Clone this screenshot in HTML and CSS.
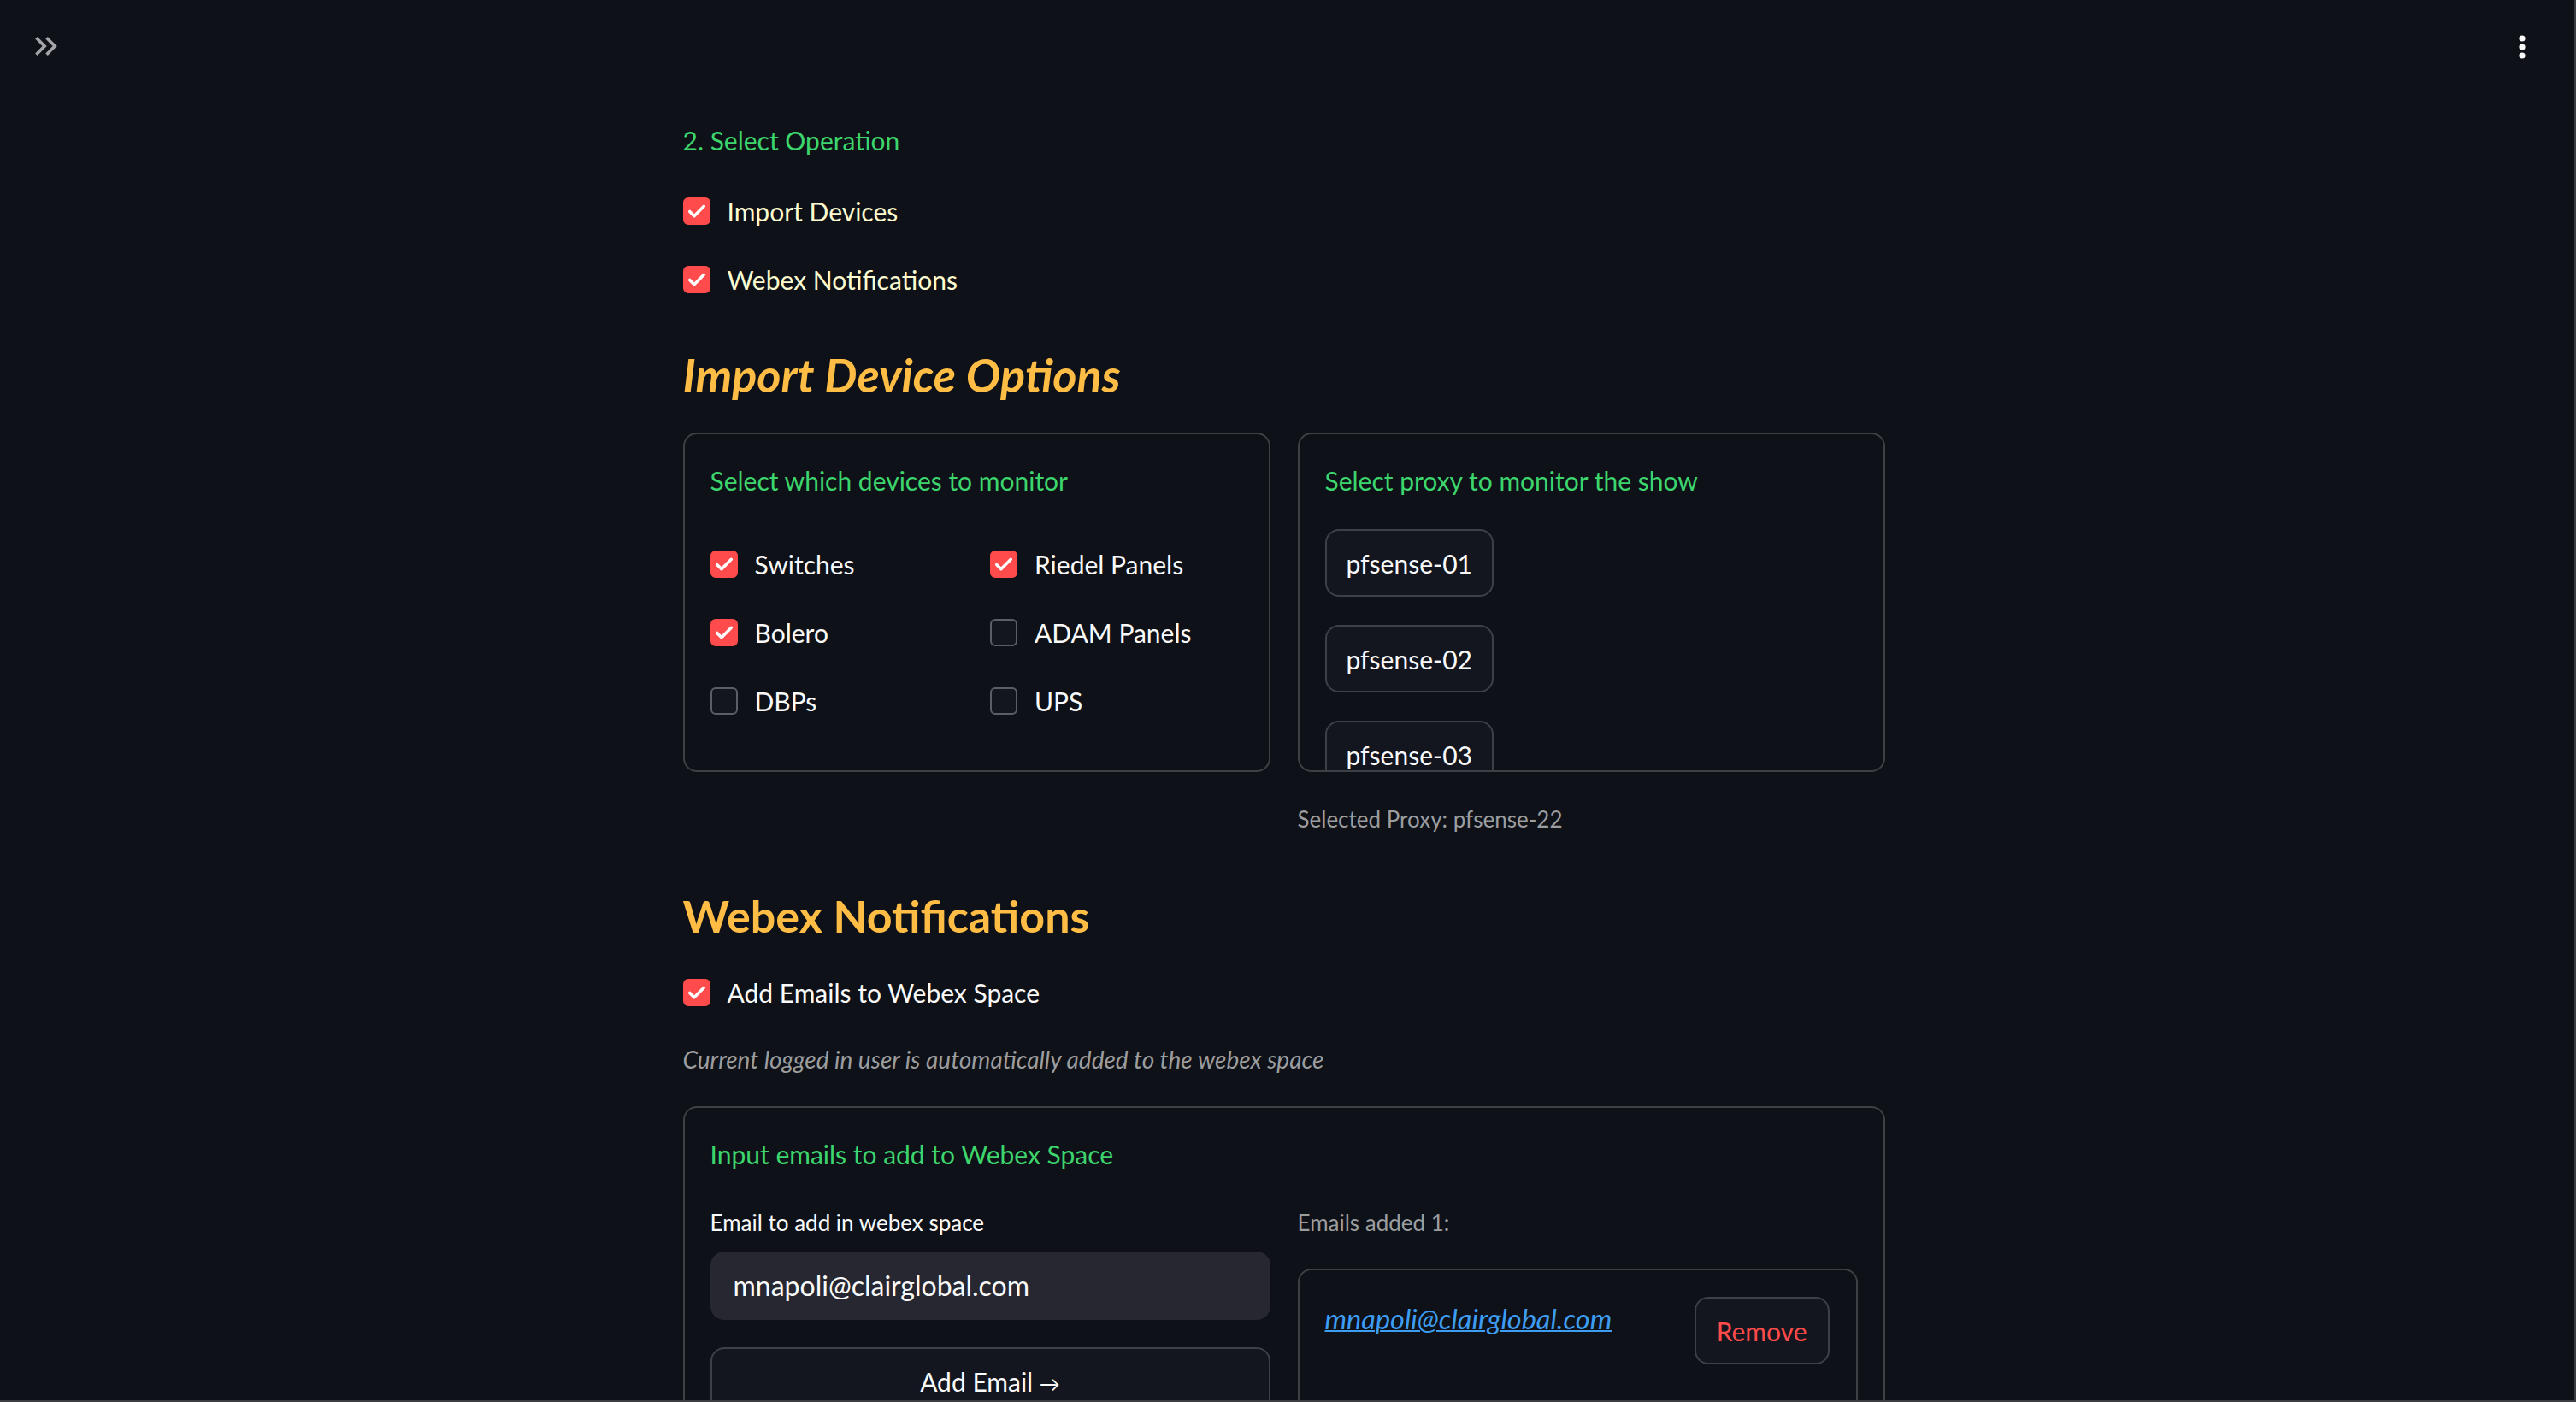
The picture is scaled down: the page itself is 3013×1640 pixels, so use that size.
FILE: index.html
```html
<!DOCTYPE html>
<html lang="en">
<head>
  <meta charset="UTF-8">
  <title>Show Setup</title>
  <link rel="stylesheet" href="styles.css">
</head>
<body>
<div class="app">

  <header class="toolbar">
    <button class="icon-btn" title="Open sidebar">
      <svg width="44" height="44" viewBox="0 0 24 24"><path fill="currentColor" d="M6.41 6 5 7.41 9.58 12 5 16.59 6.41 18l6-6z"/><path fill="currentColor" d="M13 6l-1.41 1.41L16.17 12l-4.58 4.59L13 18l6-6z"/></svg>
    </button>
    <button class="icon-btn menu-btn" title="Main menu">
      <svg width="40" height="40" viewBox="0 0 40 40"><circle cx="20" cy="10" r="3.6" fill="currentColor"/><circle cx="20" cy="20" r="3.6" fill="currentColor"/><circle cx="20" cy="30" r="3.6" fill="currentColor"/></svg>
    </button>
  </header>

  <main class="main">
    <p class="step">2. Select Operation</p>

    <label class="check check-op is-on">
      <span class="box"><svg viewBox="0 0 32 32"><polyline points="6.5,16.5 12.5,22.5 25.5,9.5"/></svg></span>
      <span class="check-text">Import Devices</span>
    </label>
    <label class="check check-op is-on">
      <span class="box"><svg viewBox="0 0 32 32"><polyline points="6.5,16.5 12.5,22.5 25.5,9.5"/></svg></span>
      <span class="check-text">Webex Notifications</span>
    </label>

    <h3 class="section-title italic">Import Device Options</h3>

    <div class="panel-row">
      <div class="panel">
        <p class="step">Select which devices to monitor</p>
        <div class="check-grid">
          <label class="check is-on">
            <span class="box"><svg viewBox="0 0 32 32"><polyline points="6.5,16.5 12.5,22.5 25.5,9.5"/></svg></span>
            <span class="check-text">Switches</span>
          </label>
          <label class="check is-on">
            <span class="box"><svg viewBox="0 0 32 32"><polyline points="6.5,16.5 12.5,22.5 25.5,9.5"/></svg></span>
            <span class="check-text">Riedel Panels</span>
          </label>
          <label class="check is-on">
            <span class="box"><svg viewBox="0 0 32 32"><polyline points="6.5,16.5 12.5,22.5 25.5,9.5"/></svg></span>
            <span class="check-text">Bolero</span>
          </label>
          <label class="check">
            <span class="box"></span>
            <span class="check-text">ADAM Panels</span>
          </label>
          <label class="check">
            <span class="box"></span>
            <span class="check-text">DBPs</span>
          </label>
          <label class="check">
            <span class="box"></span>
            <span class="check-text">UPS</span>
          </label>
        </div>
      </div>

      <div class="panel-col">
        <div class="panel panel-scroll">
          <p class="step">Select proxy to monitor the show</p>
          <div class="proxy-list">
            <button class="btn">pfsense-01</button>
            <button class="btn">pfsense-02</button>
            <button class="btn">pfsense-03</button>
            <button class="btn">pfsense-04</button>
          </div>
        </div>
        <p class="caption">Selected Proxy: pfsense-22</p>
      </div>
    </div>

    <h3 class="section-title webex-title">Webex Notifications</h3>

    <label class="check check-emails is-on">
      <span class="box"><svg viewBox="0 0 32 32"><polyline points="6.5,16.5 12.5,22.5 25.5,9.5"/></svg></span>
      <span class="check-text">Add Emails to Webex Space</span>
    </label>

    <p class="caption note">Current logged in user is automatically added to the webex space</p>

    <div class="panel panel-emails">
      <p class="step">Input emails to add to Webex Space</p>
      <div class="email-cols">
        <div class="email-col">
          <p class="field-label">Email to add in webex space</p>
          <div class="text-input">mnapoli@clairglobal.com</div>
          <button class="btn btn-wide">Add Email <span class="arrow">→</span></button>
        </div>
        <div class="email-col">
          <p class="field-label muted">Emails added 1:</p>
          <div class="email-list">
            <a class="email-link" href="#">mnapoli@clairglobal.com</a>
            <button class="btn btn-remove">Remove</button>
          </div>
        </div>
      </div>
    </div>
  </main>

  <div class="window-edge"></div>
</div>
</body>
</html>
```

FILE: styles.css
```css
* {
  box-sizing: border-box;
}
html, body {
  height: 1640px;
  overflow: hidden;
}
body {
  margin: 0;
  background: #0e1117;
  color: #fafafa;
  font-family: Lato, "Noto Sans", sans-serif;
  font-size: 30px;
}
p {
  margin: 0;
}
.app {
  height: 1640px;
  overflow: hidden;
  padding-right: 10px;
}

/* top bar */
.toolbar {
  position: fixed;
  top: 0;
  left: 0;
  right: 0;
  display: flex;
  justify-content: space-between;
  padding: 32px 43px 0 32px;
}
.icon-btn {
  border: none;
  background: none;
  padding: 0;
  color: #a3a5ab;
  display: block;
}
.icon-btn svg {
  display: block;
}
.menu-btn {
  color: #fafafa;
  margin-top: 2px;
}

/* main column */
.main {
  max-width: 1406px;
  margin: 0 auto;
  padding-top: 140px;
}
.step {
  color: #3dd56d;
  height: 48px;
  line-height: 48px;
}

/* checkboxes */
.check {
  display: flex;
  align-items: center;
  gap: 20px;
  height: 48px;
}
.check-op {
  margin-top: 35px;
  color: #fdfbcf;
}
.check-op + .check-op {
  margin-top: 32px;
}
.box {
  width: 32px;
  height: 32px;
  border-radius: 6px;
  border: 2px solid #5b5e65;
  background: #13161d;
  flex: none;
}
.is-on .box {
  border-color: #ff4b4b;
  background: #ff4b4b;
}
.box svg {
  display: block;
  width: 28px;
  height: 28px;
}
.box polyline {
  fill: none;
  stroke: #fff;
  stroke-width: 4;
  stroke-linecap: round;
  stroke-linejoin: round;
}

/* headings */
.section-title {
  margin: 52px 0 0;
  color: #ffbd45;
  font-size: 52px;
  font-weight: 700;
  height: 72px;
  line-height: 72px;
}
.italic {
  font-style: italic;
  font-size: 54px;
}
.webex-title {
  margin-top: 57px;
}

/* bordered containers */
.panel-row {
  display: grid;
  grid-template-columns: 1fr 1fr;
  gap: 32px;
  margin-top: 31px;
}
.panel {
  border: 2px solid #3d4044;
  border-radius: 16px;
  padding: 30px;
}
.panel-row .panel {
  height: 397px;
}
.panel-scroll {
  overflow: hidden;
}
.check-grid {
  display: grid;
  grid-template-columns: 1fr 1fr;
  column-gap: 32px;
  row-gap: 32px;
  margin-top: 50px;
}
.proxy-list {
  display: flex;
  flex-direction: column;
  align-items: flex-start;
  gap: 33px;
  margin-top: 33px;
}

/* buttons */
.btn {
  font-family: inherit;
  font-size: 30px;
  color: #fafafa;
  background: #13161e;
  border: 2px solid #3d4046;
  border-radius: 16px;
  height: 79px;
  padding: 0 23px;
}
.btn-wide {
  display: block;
  width: 100%;
  height: 80px;
  margin-top: 32px;
}
.arrow {
  font-size: 24px;
}
.btn-remove {
  color: #ff4b4b;
  padding: 0 24px;
  flex: none;
}

.caption {
  color: #9c9d9f;
  font-size: 26px;
  height: 40px;
  line-height: 40px;
  margin-top: 35px;
}
.note {
  font-style: italic;
  font-size: 28px;
  margin-top: 34px;
}
.check-emails {
  margin-top: 30px;
}

/* webex email section */
.panel-emails {
  margin-top: 35px;
  min-height: 420px;
}
.email-cols {
  display: grid;
  grid-template-columns: 1fr 1fr;
  gap: 32px;
  margin-top: 36px;
}
.field-label {
  font-size: 26px;
  height: 40px;
  line-height: 40px;
}
.muted {
  color: #9c9d9f;
}
.text-input {
  margin-top: 14px;
  height: 80px;
  line-height: 80px;
  font-size: 32px;
  background: #262730;
  border-radius: 16px;
  padding: 0 27px;
}
.email-list {
  margin-top: 34px;
  border: 2px solid #3d4044;
  border-radius: 16px;
  padding: 31px 31px 31px 30px;
  min-height: 220px;
  display: flex;
  justify-content: space-between;
  align-items: flex-start;
}
.email-link {
  color: #3d9df3;
  font-style: italic;
  font-size: 32.5px;
  line-height: 48px;
  margin-top: 2px;
  text-decoration-thickness: 2px;
}

/* thin frame on the right and bottom edges of the window */
.window-edge {
  position: fixed;
  inset: 0;
  border-right: 2px solid #3b3d42;
  border-bottom: 2px solid #3b3d42;
  pointer-events: none;
}
```
